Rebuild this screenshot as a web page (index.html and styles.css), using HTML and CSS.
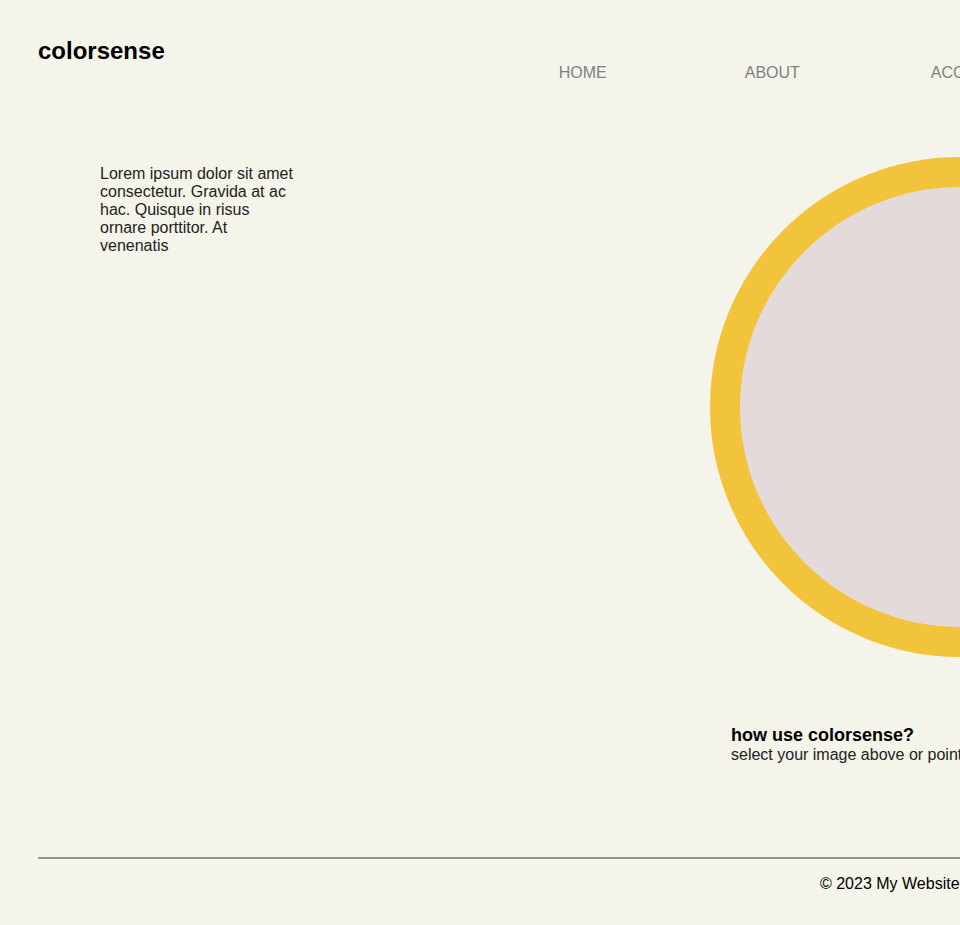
FILE: index.html
```html
<!DOCTYPE html>
<html lang="en">
<head>
  <meta charset="utf-8">
  <meta name="viewport" content="width=device-width, initial-scale=1">
  <title>colorsense</title>
  <link rel="stylesheet" href="styles.css">
</head>
<body>
  <div class="page">
    <header class="header">
      <h1 class="logo">colorsense</h1>
      <nav class="nav">
        <a class="nav-link" href="#">HOME</a>
        <a class="nav-link" href="#">ABOUT</a>
        <a class="nav-link" href="#">ACCOUNT</a>
      </nav>
    </header>
    <main class="main">
      <p class="intro">Lorem ipsum dolor sit amet consectetur. Gravida at ac hac. Quisque in risus ornare porttitor. At venenatis</p>
      <div class="showcase">
        <div class="circle"></div>
        <section class="help">
          <h2 class="help-title">how use colorsense?</h2>
          <p class="help-text">select your image above or point your camera</p>
        </section>
      </div>
    </main>
    <footer class="footer">
      <p class="copyright">© 2023 My Website. All rights reserved.</p>
    </footer>
  </div>
</body>
</html>
```
FILE: styles.css
```css
* {
  box-sizing: border-box;
  margin: 0;
  padding: 0;
}

html {
  overflow: hidden;
}

body {
  background: #f4f4ea;
  color: #000;
  font-family: "Liberation Sans", Arial, sans-serif;
  font-size: 16px;
  line-height: 18px;
}

/* The canvas is two windows wide, centred content sits on the window's right edge. */
.page {
  width: 200vw;
  padding: 37px 38px 32px;
}

.header {
  display: flex;
  align-items: flex-start;
  gap: 394px;
}

.logo {
  font-size: 24px;
  line-height: 28px;
}

.nav {
  display: grid;
  grid-template-columns: repeat(3, 186px);
  padding-top: 27px;
}

.nav-link {
  color: #808080;
  text-decoration: none;
}

.main {
  display: grid;
  grid-template-columns: 1fr 500px 1fr;
  padding-top: 75px;
}

.intro {
  width: 200px;
  margin: 8px 0 0 62px;
  color: #222;
}

.circle {
  width: 500px;
  height: 500px;
  border: 30px solid #f2c43c;
  border-radius: 50%;
  background: #e5dada;
}

.help {
  padding: 68px 0 0 21px;
  white-space: nowrap;
}

.help-title {
  font-size: 18px;
  line-height: 21px;
}

.help-text {
  color: #222;
}

.footer {
  margin-top: 93px;
  padding-top: 16px;
  border-top: 2px solid #93938c;
  text-align: center;
}
```
